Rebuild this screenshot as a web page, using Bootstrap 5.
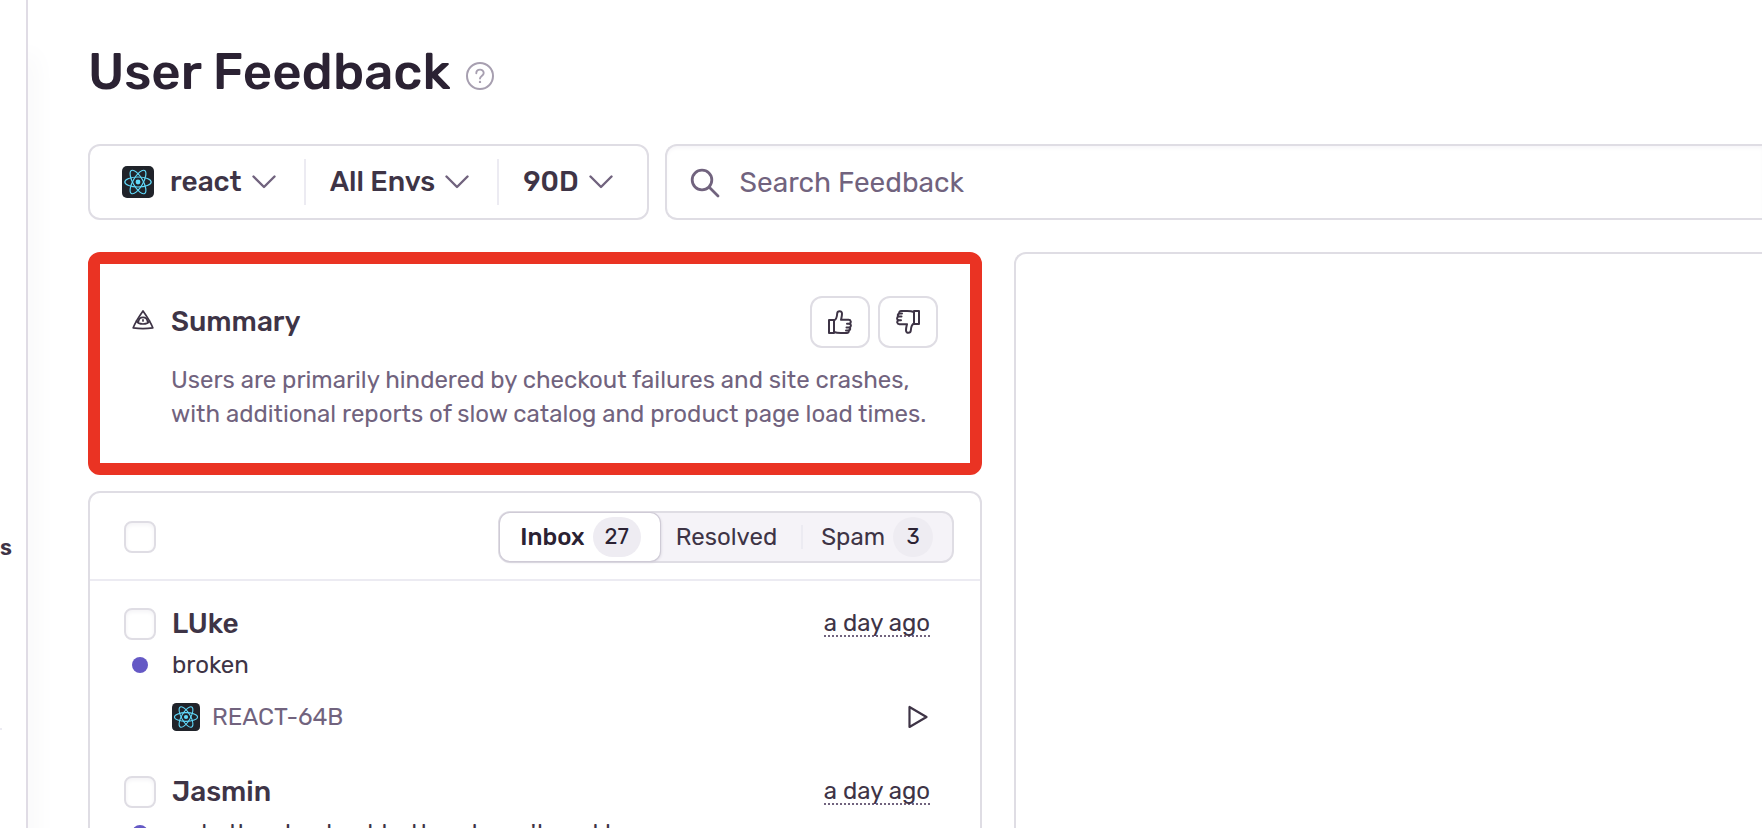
<!DOCTYPE html>
<html lang="en">
<head>
<meta charset="utf-8">
<meta name="viewport" content="width=device-width, initial-scale=1">
<title>User Feedback</title>
<link rel="stylesheet" href="https://cdn.jsdelivr.net/npm/bootstrap@5.3.0/dist/css/bootstrap.min.css">
<style>
  :root { --ink: #3e3446; --ink-strong: #2b2233; --muted: #71637e; --line: #dfdde4; --line-soft: #ecebf2; --accent: #6559c5; --danger: #ea3323; }
  body { font-family: Rubik, Roboto, "Liberation Sans", sans-serif; color: var(--ink); font-size: 24px; line-height: 34px; background: #fff; }
  svg { display: block; flex: none; }
  .side-panel { width: 28px; border-right: 2px solid #e0dce5; box-shadow: 12px 50px 24px -4px #f8f8f9; flex: none; }
  .side-label { margin-top: 531px; font-size: 22px; font-weight: 600; }
  .side-rule { width: 2px; height: 2px; margin-top: 163px; background: var(--line-soft); }
  .content-area { padding: 40px 0 0 60px; min-width: 0; }
  .page-title { font-size: 51px; line-height: 64px; font-weight: 500; color: var(--ink-strong); }
  .bare { border: 0; background: none; padding: 0; color: inherit; }
  .help-btn { color: #a79fb0; margin-top: 8px; }
  .filter-row { margin-top: 40px; }
  .frame { border: 2px solid var(--line); border-radius: 12px; background: #fff; }
  .filter-group { height: 76px; padding: 0 10px 0 8px; flex: none; }
  .filter-btn { padding: 0 28px 0 24px; font-size: 28px; font-weight: 500; gap: 10px; height: 46px; color: var(--ink); }
  .filter-btn + .filter-btn { border-left: 2px solid var(--line-soft); }
  .filter-btn:last-child { padding-right: 24px; }
  .filter-btn .logo { margin-right: 6px; }
  .filter-btn .chev { color: var(--muted); }
  .search-box { height: 76px; border-right: 0; border-radius: 12px 0 0 12px; padding: 2px 0 0 23px; gap: 20px; color: var(--muted); box-shadow: inset 0 3px 4px -1px #f6f5f8; }
  .search-box input { border: 0; outline: 0; background: transparent; font-size: 28px; color: var(--muted); min-width: 0; padding: 0; }
  .search-box input::placeholder { color: var(--muted); opacity: 1; }
  .panes { display: grid; grid-template-columns: minmax(0, 894fr) minmax(0, 748fr); gap: 32px; margin-top: 32px; }
  .pane-left { display: grid; gap: 16px; align-content: start; }
  .summary-box { border: 12px solid var(--danger); border-radius: 12px; padding: 32px; }
  .summary-box h2 { font-size: 28px; font-weight: 500; }
  .eye-icon { margin: 0 17px 4px 0; }
  .summary-text { margin: 15px 0 0 39px; color: var(--muted); }
  .vote-btn { width: 60px; height: 52px; border: 2px solid var(--line); color: var(--ink); }
  .detail-pane { border-right: 0; border-radius: 12px 0 0 0; }
  .list-head { height: 88px; padding: 2px 26px 0 34px; border-bottom: 2px solid var(--line-soft); }
  .tick { width: 32px; height: 32px; margin: 0; border: 2px solid var(--line); border-radius: 8px; appearance: none; background: #fff; box-shadow: inset 0 2px 4px #f4f3f6; flex: none; }
  .tab-group { height: 52px; background: #f5f3f8; }
  .tab-group button { color: var(--ink); height: 48px; padding: 0 19px 0 18px; }
  .tab-group .tab-plain { padding: 0 24px 0 16px; }
  .tab-group .is-on { background: #fff; color: var(--ink-strong); font-weight: 500; border-radius: 10px; padding: 0 19px 0 20px; box-shadow: 0 0 0 1px #cfcbd6, 1px 1px 3px #cfcbd6; }
  .tab-sep { width: 2px; height: 24px; background: var(--line-soft); }
  .pill { height: 40px; line-height: 40px; min-width: 40px; border-radius: 20px; padding: 0 12px; font-size: 22px; font-weight: 400; color: var(--ink-strong); background: #eeecf2; }
  .fb-item { padding: 23px 50px 15px 34px; display: grid; grid-template-columns: 32px minmax(0, 1fr) auto; column-gap: 16px; grid-template-rows: 40px 42px 48px; align-items: center; }
  .fb-name { font-size: 28px; font-weight: 500; color: var(--ink); }
  .fb-dot { width: 16px; height: 16px; border-radius: 50%; background: var(--accent); justify-self: center; }
  .fb-msg, .fb-issue { grid-column: 2; }
  .fb-issue { color: var(--muted); gap: 12px; align-self: end; }
  .fb-time { line-height: 24px; border-bottom: 2px dotted var(--muted); }
  .fb-play { justify-self: end; align-self: end; margin: 0 2px 5px 0; }
</style>
</head>
<body>
<svg width="0" height="0" class="position-absolute" aria-hidden="true">
  <symbol id="i-react" viewBox="0 0 32 32">
    <rect width="32" height="32" rx="5" fill="#20232a"/>
    <g fill="none" stroke="#61dafb" stroke-width="1.2">
      <ellipse cx="16" cy="16" rx="13.2" ry="5"/>
      <ellipse cx="16" cy="16" rx="13.2" ry="5" transform="rotate(60 16 16)"/>
      <ellipse cx="16" cy="16" rx="13.2" ry="5" transform="rotate(120 16 16)"/>
    </g>
    <circle cx="16" cy="16" r="2.4" fill="#61dafb"/>
  </symbol>
  <symbol id="i-chev" viewBox="0 0 24 14"><path d="M1.500 1.500 12 12 22.500 1.500" fill="none" stroke="currentColor" stroke-width="2.400" stroke-linecap="round" stroke-linejoin="round"/></symbol>
  <symbol id="i-thumb" viewBox="0 0 24 24">
    <g fill="none" stroke="currentColor" stroke-width="2" stroke-linejoin="round" stroke-linecap="round">
      <path d="M1 10h5v13H1z"/>
      <path d="M6 10.500C8.500 9.500 9 7 9.200 3.500 9.400.600 14 .200 14 3.800 14 6 13.500 7.600 13 9.800h7.600c2.400 0 3 3 .9 3.900 1.900.5 1.900 3.300 0 3.900 1.200 1 .7 2.700-.7 3 .2 1.500-.6 2.400-2 2.400h-6C10 23 8 22.800 6 22"/>
      <path d="M19 13.700h2.500M18.500 17.500h3M18 20.600h2.500"/>
    </g>
  </symbol>
</svg>

<div class="d-flex vh-100 overflow-hidden">
  <aside class="side-panel">
    <div class="side-label">s</div>
    <div class="side-rule"></div>
  </aside>

  <main class="content-area flex-grow-1">
    <header class="d-flex align-items-center gap-3">
      <h1 class="page-title m-0">User Feedback</h1>
      <button class="bare help-btn" type="button" aria-label="About user feedback">
        <svg width="28" height="28" viewBox="0 0 28 28" fill="none" stroke="#a79fb0" stroke-linecap="round"><circle cx="14" cy="14" r="13" stroke-width="2"/><path d="M10.300 11.200C10.300 6.500 17.700 6.500 17.700 11c0 3-3.700 3-3.700 5.600" stroke-width="1.900"/><circle cx="14" cy="19.900" r=".5" stroke-width="1.400"/></svg>
      </button>
    </header>

    <div class="filter-row d-flex gap-3">
      <div class="frame filter-group d-flex align-items-center">
        <button class="bare filter-btn d-flex align-items-center" type="button"><svg class="logo" width="32" height="32"><use href="#i-react"/></svg>react<svg class="chev" width="24" height="14"><use href="#i-chev"/></svg></button>
        <button class="bare filter-btn d-flex align-items-center" type="button">All Envs<svg class="chev" width="24" height="14"><use href="#i-chev"/></svg></button>
        <button class="bare filter-btn d-flex align-items-center" type="button">90D<svg class="chev" width="24" height="14"><use href="#i-chev"/></svg></button>
      </div>
      <label class="frame search-box d-flex align-items-center flex-grow-1">
        <svg width="30" height="30" viewBox="0 0 30 30" fill="none" stroke="currentColor" stroke-width="2.800" stroke-linecap="round"><circle cx="12" cy="12" r="9.800"/><path d="M19.500 19.500 28 28"/></svg>
        <input class="flex-grow-1" type="text" placeholder="Search Feedback" aria-label="Search Feedback">
      </label>
    </div>

    <div class="panes">
      <div class="pane-left">
        <section class="summary-box">
          <div class="d-flex align-items-center">
            <svg class="eye-icon" width="22" height="20" viewBox="0 0 22 20" fill="none" stroke="currentColor" stroke-width="1.700" stroke-linejoin="round" stroke-linecap="round"><path d="M11 1C8.500 4.500 3.500 12 1.200 17.800c6.500 1 13 1 19.600 0C18.500 12 13.500 4.500 11 1z"/><path d="M4.500 11C6.500 15 15.500 15 17.500 11"/><path d="M6.500 11.500C7 6 15 6 15.500 11.500"/><path d="M11 9.800v1.200"/></svg>
            <h2 class="m-0 flex-grow-1">Summary</h2>
            <div class="d-flex gap-2">
              <button class="bare frame vote-btn d-grid" type="button" aria-label="Helpful"><svg class="m-auto" width="24" height="24"><use href="#i-thumb"/></svg></button>
              <button class="bare frame vote-btn d-grid" type="button" aria-label="Not helpful"><svg class="m-auto" width="24" height="24" viewBox="0 0 24 24"><use href="#i-thumb" transform="rotate(180 12 12)"/></svg></button>
            </div>
          </div>
          <p class="summary-text">Users are primarily hindered by checkout failures and site crashes, with additional reports of slow catalog and product page load times.</p>
        </section>

        <section class="frame">
          <div class="list-head d-flex align-items-center justify-content-between">
            <input class="tick" type="checkbox" aria-label="Select all">
            <div class="frame tab-group d-flex align-items-center">
              <button class="bare is-on d-flex align-items-center gap-2" type="button">Inbox <span class="pill">27</span></button>
              <button class="bare tab-plain" type="button">Resolved</button>
              <span class="tab-sep"></span>
              <button class="bare d-flex align-items-center gap-2" type="button">Spam <span class="pill">3</span></button>
            </div>
          </div>

          <article class="fb-item">
            <input class="tick" type="checkbox" id="pick-1">
            <label class="fb-name" for="pick-1">LUke</label>
            <time class="fb-time">a day ago</time>
            <span class="fb-dot"></span>
            <div class="fb-msg">broken</div>
            <div class="fb-issue d-flex align-items-center"><svg width="28" height="28"><use href="#i-react"/></svg>REACT-64B</div>
            <svg class="fb-play" width="20" height="24" viewBox="0 0 20 24" fill="none" stroke="currentColor" stroke-width="2.200" stroke-linejoin="round"><path d="M1.500 2v20L18.500 12z"/></svg>
          </article>

          <article class="fb-item">
            <input class="tick" type="checkbox" id="pick-2">
            <label class="fb-name" for="pick-2">Jasmin</label>
            <time class="fb-time">a day ago</time>
            <span class="fb-dot"></span>
            <div class="fb-msg">note the checkout button doesn't work!</div>
          </article>
        </section>
      </div>
      <section class="frame detail-pane" aria-label="Feedback details"></section>
    </div>
  </main>
</div>
<script src="https://cdn.jsdelivr.net/npm/bootstrap@5.3.0/dist/js/bootstrap.bundle.min.js"></script>
</body>
</html>
